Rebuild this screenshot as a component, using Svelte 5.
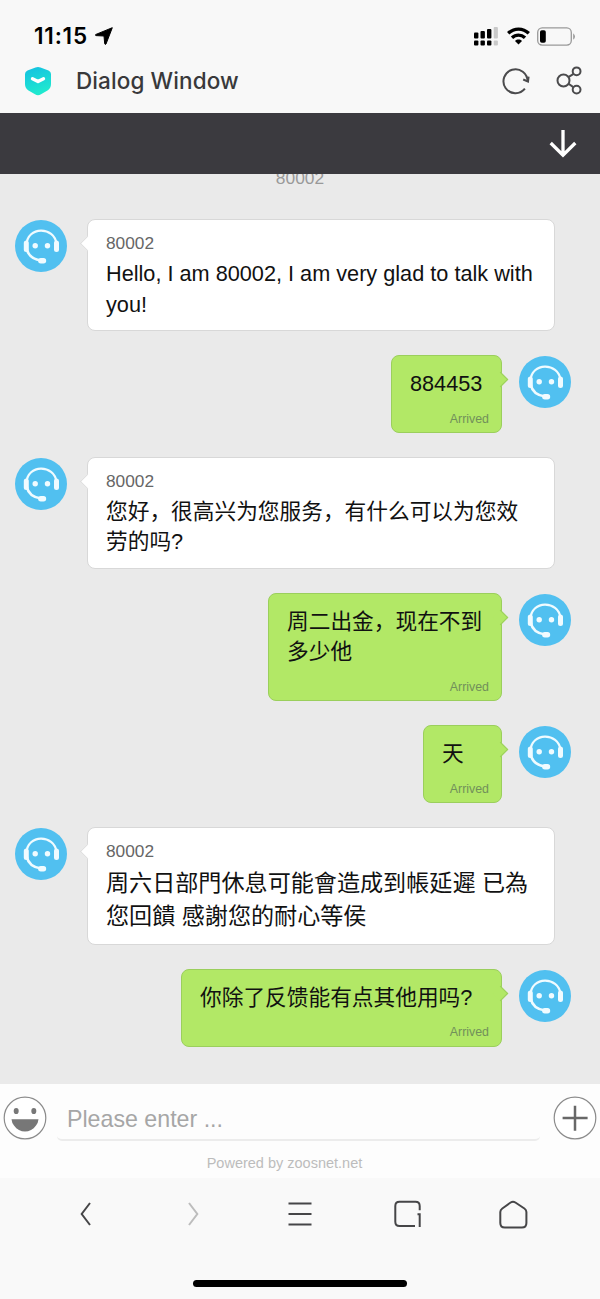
<script>
  let draft = $state('');

  const messages = [
    { from: 'agent', lines: ['Hello, I am 80002, I am very glad to talk with', 'you!'] },
    { from: 'me', width: 111, lines: ['884453'] },
    { from: 'agent', lines: ['您好，很高兴为您服务，有什么可以为您效', '劳的吗?'] },
    { from: 'me', width: 234, lines: ['周二出金，现在不到', '多少他'] },
    { from: 'me', width: 79, lines: ['天'] },
    { from: 'agent', large: true, lines: ['周六日部門休息可能會造成到帳延遲 已為', '您回饋 感謝您的耐心等侯'] },
    { from: 'me', width: 321, lines: ['你除了反馈能有点其他用吗?'] }
  ];
</script>

{#snippet avatar()}
  <svg class="avatar" viewBox="0 0 52 52">
    <circle cx="26" cy="26" r="26" fill="#51c0f0" />
    <g fill="none" stroke="#f0fbff" stroke-linecap="round">
      <path d="M11.500 25C12 6 39.500 6 41.500 24" stroke-width="2.200" />
      <path d="M11.500 28C13 35 18 39.500 26 40.500" stroke-width="2.600" />
      <path d="M11.300 23v6.500M41.500 23v6.500" stroke-width="5" />
      <path d="M25.800 40.800h2.700" stroke-width="5.400" />
    </g>
    <circle cx="20.200" cy="25.700" r="2.700" fill="#f0fbff" />
    <circle cx="32.500" cy="25.700" r="2.700" fill="#f0fbff" />
  </svg>
{/snippet}

<div class="screen">
  <header class="status">
    <span class="time">11:15</span>
    <svg class="location" width="18" height="18" viewBox="0 0 18 18">
      <path d="M17.300.700 11 17q-.8 1-1.300-.3L9 9 1 8.600q-1.400-.6 0-1.200Z" fill="#000" stroke="#000" stroke-width="1" stroke-linejoin="round" />
    </svg>
    <div class="indicators">
      <svg width="24" height="19" viewBox="0 0 24 19">
        <g fill="#000">
          <rect y="5.500" width="4.400" height="6" rx="1" />
          <rect x="6.500" y="4" width="4.400" height="7.500" rx="1" />
          <rect x="13" y="2" width="4.400" height="9.500" rx="1" />
          <rect y="13.500" width="4.400" height="5" rx="1" />
          <rect x="6.500" y="13.500" width="4.400" height="5" rx="1" />
          <rect x="13" y="13.500" width="4.400" height="5" rx="1" />
        </g>
        <g fill="#c9c9c9">
          <rect x="19.700" y="0" width="4.200" height="11.500" rx="1" />
          <rect x="19.700" y="13.500" width="4.200" height="5" rx="1" />
        </g>
      </svg>
      <svg class="wifi" width="23" height="18" viewBox="0 0 23 18">
        <g fill="none" stroke="#000" stroke-width="3.300">
          <path d="M1.200 6.300C7 .6 16 .6 21.800 6.300" />
          <path d="M5 10.800c3.800-3.700 9.200-3.700 13 0" />
        </g>
        <path d="M8 14c2-1.900 5-1.900 7 0l-3.500 3.600Z" fill="#000" />
      </svg>
      <svg class="battery" width="39" height="19" viewBox="0 0 39 19">
        <rect x=".7" y=".9" width="33.600" height="17.200" rx="4.500" fill="none" stroke="#999" stroke-width="1.300" />
        <rect x="3" y="3.300" width="5.800" height="12.400" rx="1.800" fill="#000" />
        <path d="M36.200 6.200q3.600 3.300 0 6.600Z" fill="#999" />
      </svg>
    </div>
  </header>

  <div class="titlebar">
    <svg width="28" height="30" viewBox="0 0 28 30">
      <defs>
        <linearGradient id="shield" x1="0" y1="0" x2="0.300" y2="1">
          <stop offset="0" stop-color="#14bfe2" />
          <stop offset="1" stop-color="#1fe9cf" />
        </linearGradient>
      </defs>
      <path d="M11.500 1.500q2.500-1.200 5 0l8 3q2.500 1 2.500 3.500v10q0 4-3.500 6.500L17 28.300q-3 1.700-6 0l-6.500-3.800Q1 22 1 18V8q0-2.500 2.500-3.500Z" fill="url(#shield)" />
      <path d="m8.500 12.700 5.500 2.900 5.500-2.900" fill="none" stroke="#fff" stroke-width="3.400" stroke-linecap="round" stroke-linejoin="round" />
    </svg>
    <h1>Dialog Window</h1>
    <svg class="reload" width="28" height="28" viewBox="0 0 28 28" fill="none" stroke="#4b4b4d" stroke-width="2">
      <path d="M22.900 21.700A12 12 0 1 1 25.500 14.500" />
      <path d="m21.200 12.500 4.800 2 .6-4.800" />
    </svg>
    <svg class="share" width="28" height="28" viewBox="0 0 28 28" fill="none" stroke="#4b4b4d" stroke-width="2">
      <circle cx="7.500" cy="13.500" r="6" />
      <circle cx="20.600" cy="4.300" r="3.900" />
      <circle cx="20.600" cy="22.600" r="3.900" />
      <path d="m12.800 9.800 4.800-3M12.600 16.800l5 3.600" />
    </svg>
  </div>

  <div class="banner">
    <svg width="28" height="28" viewBox="0 0 28 28" fill="none" stroke="#fff" stroke-width="3.300">
      <path d="M14 0v25.500M1.700 13 14 25.200l12.300-12.200" />
    </svg>
  </div>

  <main class="chat">
    <p class="clipped">80002</p>
    {#each messages as message}
      <div class="row" class:mine={message.from === 'me'}>
        {@render avatar()}
        <div class="bubble" class:large={message.large} style:width={message.width ? `${message.width}px` : null}>
          {#if message.from === 'agent'}
            <div class="sender">80002</div>
          {/if}
          <div class="text">
            {#each message.lines as line}
              <div>{line}</div>
            {/each}
          </div>
          {#if message.from === 'me'}
            <div class="state">Arrived</div>
          {/if}
        </div>
      </div>
    {/each}
  </main>

  <section class="composer">
    <div class="entry">
      <svg width="44" height="44" viewBox="0 0 44 44">
        <circle cx="22" cy="22" r="20.800" fill="#fff" stroke="#8b8b8b" stroke-width="1.200" />
        <ellipse cx="13.200" cy="15" rx="2.500" ry="3.100" fill="#777" />
        <ellipse cx="30.800" cy="15" rx="2.500" ry="3.100" fill="#777" />
        <path d="M8.500 23.200h27q-.3 3.500-2.500 6.400c-5.500 8-16.500 8-22 0q-2.200-2.900-2.500-6.400Z" fill="#777" />
      </svg>
      <input type="text" placeholder="Please enter ..." bind:value={draft} />
      <svg width="44" height="44" viewBox="0 0 44 44" fill="none">
        <circle cx="22" cy="22" r="20.800" fill="#fff" stroke="#8b8b8b" stroke-width="1.200" />
        <path d="M9.600 22h25M22 9.700v25" stroke="#686868" stroke-width="2.500" />
      </svg>
    </div>
    <p class="powered">Powered by zoosnet.net</p>
  </section>

  <nav>
    <div class="tabs">
      <svg width="30" height="30" viewBox="0 0 30 30"><path d="m18 4-8.300 11 8.300 11" /></svg>
      <svg class="dim" width="30" height="30" viewBox="0 0 30 30"><path d="m10 4 8.300 11-8.300 11" /></svg>
      <svg width="30" height="30" viewBox="0 0 30 30"><path d="M3.500 4.500h23M3.500 15h23M3.500 25.500h23" /></svg>
      <svg width="30" height="30" viewBox="0 0 30 30">
        <path d="M23 27H7.500Q3.300 27 3.300 22.800V7Q3.300 2.800 7.500 2.800H23.500q4.200 0 4.200 4.200v4.200M25.500 15.300h2.200V28" />
      </svg>
      <svg width="30" height="30" viewBox="0 0 30 30">
        <path d="M12.600 3.500q2.400-1.500 4.800 0l9 6q2 1.400 2 3.500v11q0 4.500-4.500 4.500H6.800q-4.500 0-4.500-4.500V13q0-2.100 2-3.500Z" />
      </svg>
    </div>
    <div class="home-indicator"></div>
  </nav>
</div>

<style>
  :global(body) {
    margin: 0;
    background: #f8f8f8;
  }
  .screen {
    width: 600px;
    height: 1299px;
    display: flex;
    flex-direction: column;
    overflow: hidden;
    background: #f8f8f8;
    font-family: "Liberation Sans", "Noto Sans CJK SC", sans-serif;
  }
  svg {
    display: block;
    flex-shrink: 0;
    overflow: visible;
  }
  p, h1 {
    margin: 0;
  }

  /* Status and title */
  .status {
    height: 54px;
    box-sizing: border-box;
    padding: 18px 24px 0 34px;
    display: flex;
    align-items: center;
  }
  .time {
    width: 61px;
    font: 600 22.500px/36px Inter, sans-serif;
    letter-spacing: 0.8px;
    color: #000;
  }
  .indicators {
    margin-left: auto;
    display: flex;
    align-items: center;
  }
  .wifi {
    margin-left: 9px;
  }
  .battery {
    margin-left: 7px;
  }
  .titlebar {
    height: 59px;
    box-sizing: border-box;
    padding: 0 16px 5px 24px;
    display: flex;
    align-items: center;
  }
  .titlebar h1 {
    margin-left: 24px;
    font: 500 22.500px/30px Inter, sans-serif;
    letter-spacing: 0.1px;
    color: #39393b;
    white-space: nowrap;
  }
  .reload {
    margin-left: auto;
  }
  .share {
    margin-left: 26px;
  }
  .banner {
    height: 61px;
    box-sizing: border-box;
    padding: 0 23px 0 0;
    display: flex;
    align-items: center;
    justify-content: flex-end;
    background: #3b3a3f;
  }

  /* Conversation */
  .chat {
    height: 910px;
    overflow: hidden;
    display: flex;
    flex-direction: column;
    background: #eaeaea;
  }
  .clipped {
    height: 45px;
    flex-shrink: 0;
    font-size: 17.400px;
    line-height: 9px;
    text-align: center;
    color: #999;
  }
  .row {
    display: flex;
    align-items: flex-start;
    margin: 0 0 24px 15px;
  }
  .row.mine {
    flex-direction: row-reverse;
    margin: 0 29px 24px 0;
  }
  .avatar {
    width: 52px;
    height: 52px;
    margin-top: 1px;
  }
  .bubble {
    position: relative;
    box-sizing: border-box;
    width: 468px;
    margin-left: 20px;
    padding: 11px 18px 10px;
    border: 1px solid #d8d8d8;
    border-radius: 8px;
    background: #fff;
    color: #111;
  }
  .bubble::before {
    content: '';
    position: absolute;
    top: 18px;
    left: -6px;
    width: 10px;
    height: 10px;
    border: 1px solid #dedede;
    border-width: 0 0 1px 1px;
    background: #fff;
    transform: rotate(45deg);
  }
  .mine .bubble {
    margin: 0 17px 0 0;
    padding: 13px 18px 5.300px;
    border-color: #9bcf5c;
    background: #b2e866;
  }
  .mine .bubble::before {
    left: auto;
    right: -5px;
    border-color: #9bcf5c;
    border-width: 1px 1px 0 0;
    background: #b2e866;
  }
  .sender {
    height: 28px;
    font-size: 17.300px;
    line-height: 25px;
    color: #666;
  }
  .text {
    font-size: 21.700px;
    line-height: 30.500px;
    white-space: nowrap;
  }
  .large .text {
    font-size: 23.100px;
    line-height: 33.500px;
  }
  .state {
    margin: 12px -6px 0 0;
    font-size: 12.400px;
    line-height: 15px;
    text-align: right;
    color: #71905a;
  }

  /* Composer */
  .composer {
    height: 94px;
    background: #fdfdfd;
  }
  .entry {
    display: flex;
    align-items: center;
    padding: 11.500px 3px 0;
  }
  .entry input {
    flex: 1;
    min-width: 0;
    height: 45px;
    box-sizing: border-box;
    margin: 0 13px 0 10px;
    padding: 4px 10px 0;
    border: 0;
    border-bottom: 2px solid #ececec;
    border-radius: 5px;
    outline: none;
    background: #fdfdfd;
    font: 23.200px "Liberation Sans", sans-serif;
    color: #111;
  }
  .entry input::placeholder {
    color: #a6a6a6;
    opacity: 1;
  }
  .powered {
    margin: 13px 31px 0 0;
    font-size: 14.500px;
    line-height: 18px;
    text-align: center;
    color: #bcbcbc;
  }

  /* Browser toolbar */
  nav {
    flex: 1;
    background: #f9f9f9;
  }
  .tabs {
    display: flex;
    justify-content: space-between;
    padding: 21px 72px 0;
    fill: none;
    stroke: #464648;
    stroke-width: 2;
  }
  .dim {
    stroke: #bdbdbd;
  }
  .home-indicator {
    width: 214px;
    height: 7px;
    margin: 51px auto 0;
    border-radius: 4px;
    background: #000;
  }
</style>
